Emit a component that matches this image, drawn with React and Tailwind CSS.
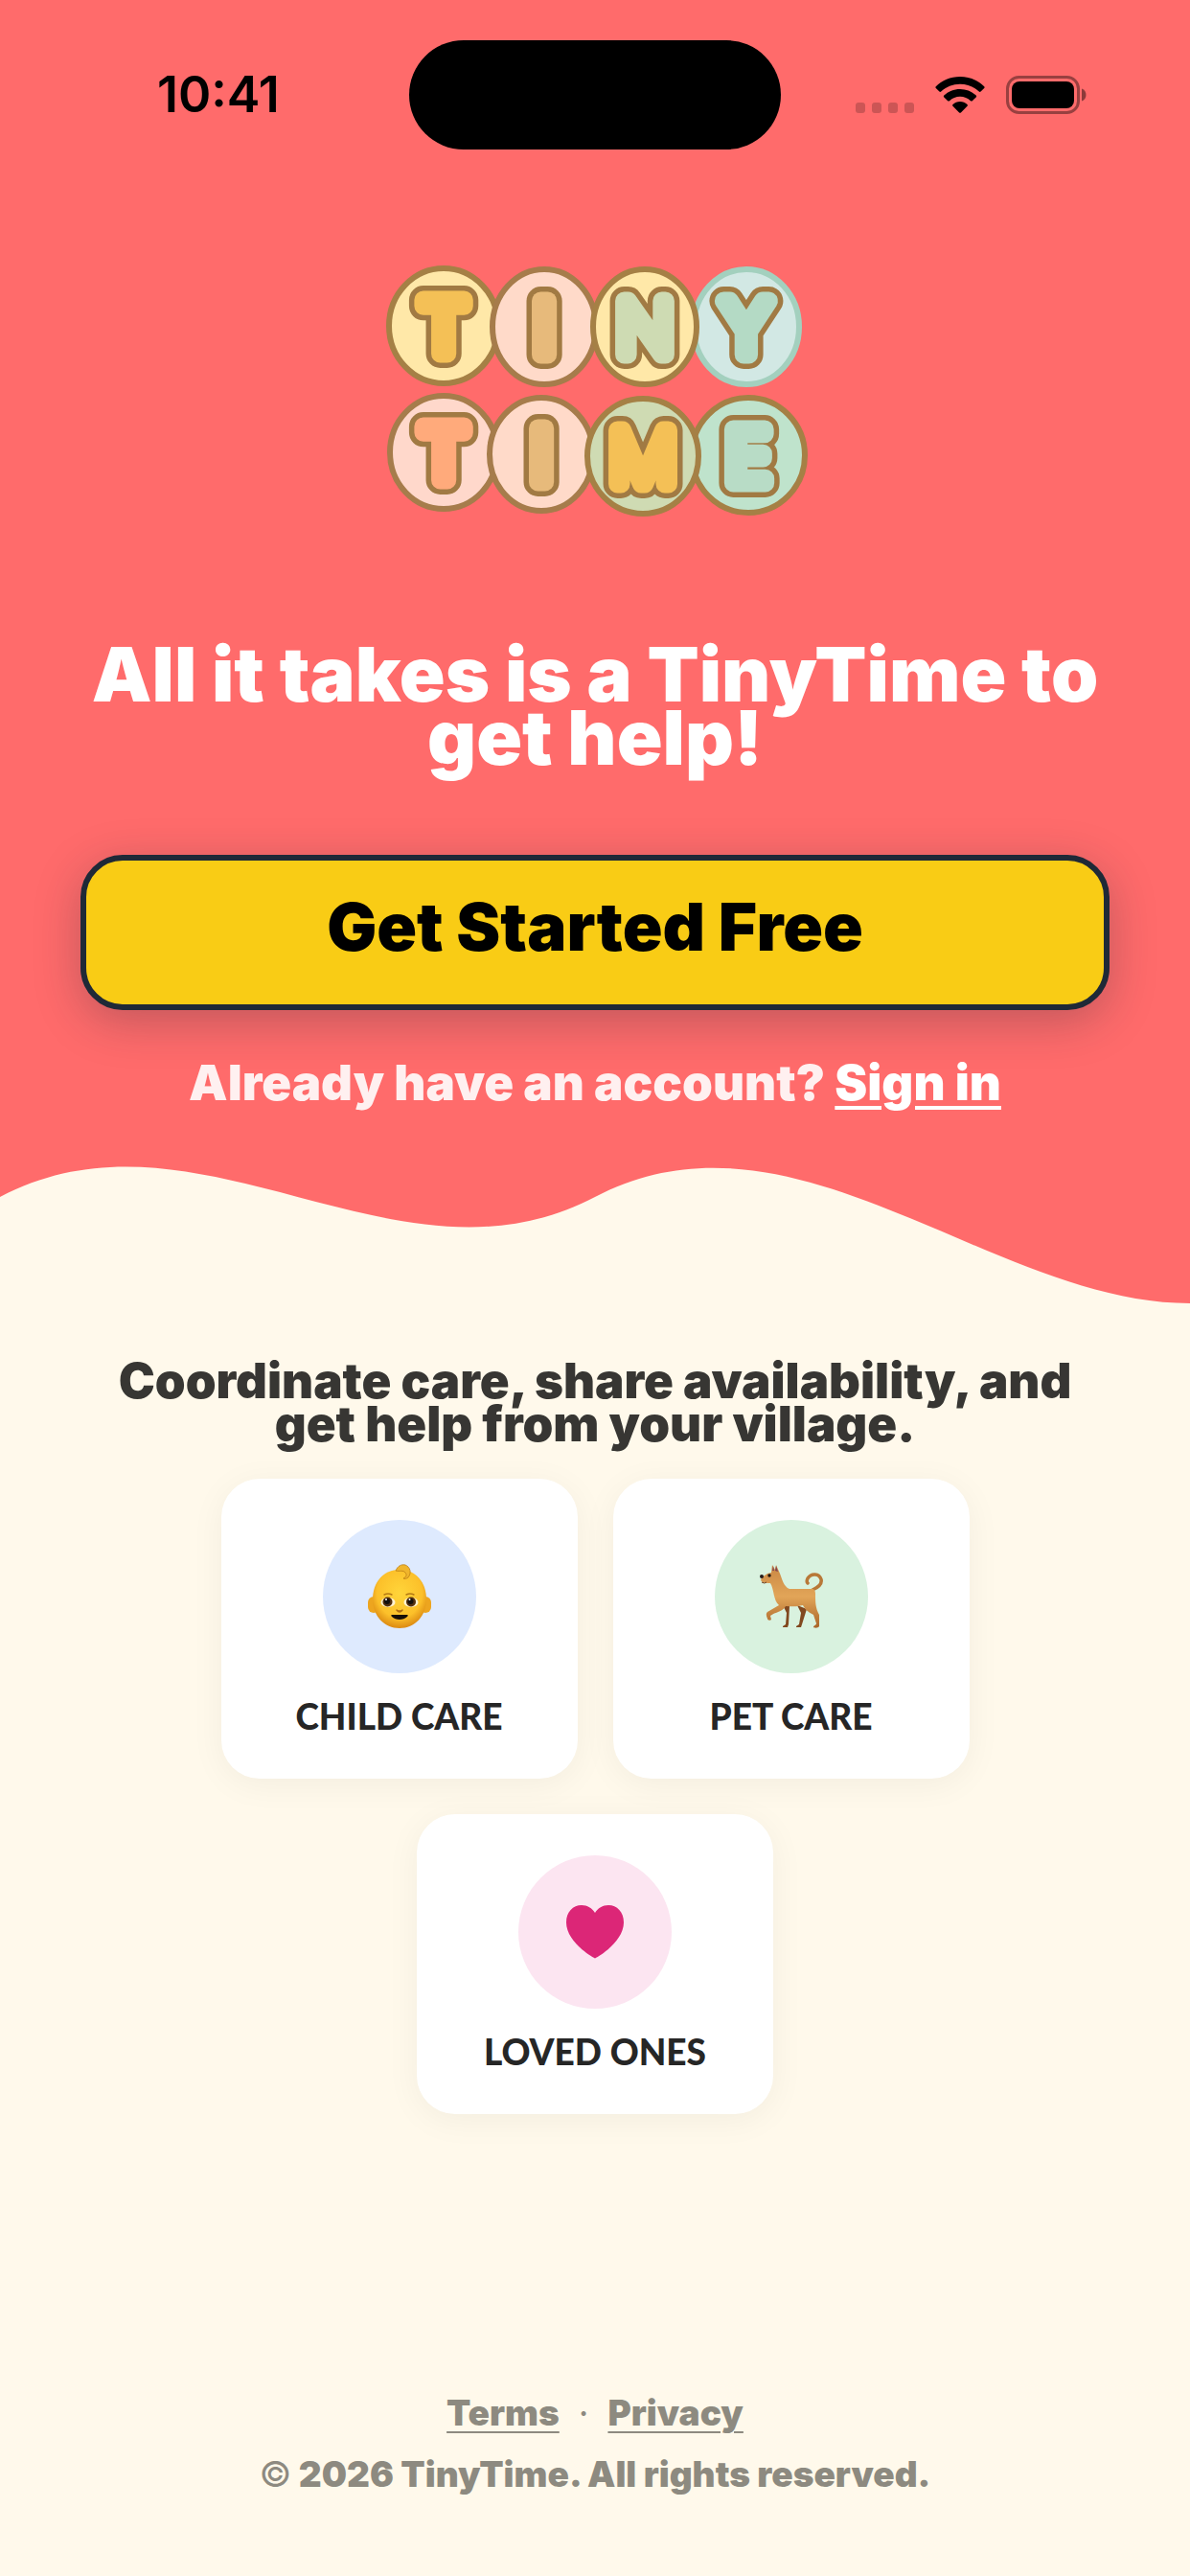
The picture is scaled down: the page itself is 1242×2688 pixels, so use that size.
const ROWS = [
  [
    { letter: "T", cx: 82, cy: 80, rx: 57, ry: 60, bg: "#ffe8a8", ring: "#a58045", fill: "#f4c056", weight: 400 },
    { letter: "Y", cx: 398, cy: 81, rx: 55, ry: 60, bg: "#d2e8e4", ring: "#a3d0be", fill: "#b4dac5", weight: 300 },
    { letter: "I", cx: 187, cy: 81, rx: 54, ry: 60, bg: "#ffdac9", ring: "#a67c4b", fill: "#e7ba7b", weight: 400 },
    { letter: "N", cx: 292, cy: 81, rx: 54, ry: 60, bg: "#ffe8a8", ring: "#a58045", fill: "#cedbb3", weight: 200 },
  ],
  [
    { letter: "T", cx: 82, cy: 212, rx: 56, ry: 59, bg: "#ffd8cb", ring: "#a67c4b", fill: "#ffaa7b", weight: 400 },
    { letter: "I", cx: 184, cy: 214, rx: 54, ry: 59, bg: "#ffdac9", ring: "#a67c4b", fill: "#e7ba7b", weight: 400 },
    { letter: "E", cx: 400, cy: 215, rx: 59, ry: 60, bg: "#bfe3cc", ring: "#a58045", fill: "#b8dcc6", weight: 300 },
    { letter: "M", cx: 290, cy: 216, rx: 58, ry: 60, bg: "#cfdbb3", ring: "#a58045", fill: "#f4c056", weight: 200 },
  ],
];

function Logo() {
  return (
    <svg viewBox="0 0 480 300" className="w-[480px] h-[300px]" role="img" aria-label="Tiny Time">
      {ROWS.flat().map((b) => (
        <g key={b.letter + b.cy}>
          <ellipse cx={b.cx} cy={b.cy} rx={b.rx} ry={b.ry} fill={b.bg} stroke={b.ring} strokeWidth="6" />
          <g
            fontFamily="Inter, sans-serif"
            fontSize="77"
            fontWeight={b.weight}
            textAnchor="middle"
            strokeLinejoin="round"
            strokeLinecap="round"
          >
            <text x={b.cx} y={b.cy + 29} fill="#a17a43" stroke="#a17a43" strokeWidth="30">{b.letter}</text>
            <text x={b.cx} y={b.cy + 29} fill={b.fill} stroke={b.fill} strokeWidth="19">{b.letter}</text>
          </g>
        </g>
      ))}
    </svg>
  );
}

function StatusBar() {
  return (
    <div className="flex justify-between items-center pt-[42px] pl-[164px] pr-[108px]">
      <span className="w-[263px] text-left font-semibold text-[52px] leading-[60px] text-black">10:41</span>
      <div className="w-[388px] h-[114px] rounded-full bg-black" />
      <div className="flex items-center justify-end w-[319px] gap-[22px]">
        <svg viewBox="0 0 61 40" className="w-[61px] h-10" fill="#000" fillOpacity="0.2">
          <rect x="0" y="28" width="10" height="11" rx="3" />
          <rect x="17" y="28" width="10" height="11" rx="3" />
          <rect x="34" y="28" width="10" height="11" rx="3" />
          <rect x="51" y="28" width="10" height="11" rx="3" />
        </svg>
        <svg viewBox="0 0 52 40" className="w-[52px] h-10">
          <path d="M26 1C16 1 7 5 .8 11.2c-.6.6-.6 1.2 0 1.8l3.6 3.6c.6.6 1.2.6 1.8 0C11.5 11.6 18.4 8.7 26 8.7s14.5 2.9 19.8 7.9c.6.6 1.2.6 1.8 0l3.6-3.6c.6-.6.6-1.2 0-1.8C45 5 36 1 26 1z" />
          <path d="M26 14c-6.5 0-12.4 2.5-16.7 6.6-.6.6-.6 1.2 0 1.8l3.9 3.8c.6.6 1.2.5 1.8 0 2.900-2.700 6.800-4.400 11-4.400s8.100 1.700 11 4.400c.6.5 1.200.6 1.800 0l3.900-3.800c.6-.6.6-1.200 0-1.800C38.400 16.500 32.500 14 26 14z" />
          <path d="M26 27c-2.9 0-5.5 1.1-7.5 2.9-.6.6-.6 1.2 0 1.8l6.600 6.700c.6.6 1.200.6 1.800 0l6.600-6.700c.6-.6.6-1.200 0-1.800C31.500 28.100 28.900 27 26 27z" />
        </svg>
        <svg viewBox="0 0 84 40" className="w-[84px] h-10">
          <rect x="1.5" y="1.5" width="74" height="37" rx="12" fill="none" stroke="#000" strokeOpacity="0.4" strokeWidth="3" />
          <rect x="6" y="6" width="65" height="28" rx="8" />
          <path d="M79 13.500c3 1.200 4.500 3.500 4.500 6.500s-1.500 5.300-4.500 6.500z" fillOpacity="0.45" />
        </svg>
      </div>
    </div>
  );
}

function BabyIcon() {
  return (
    <svg viewBox="0 0 66 68" className="w-[66px] h-[68px]">
      <defs>
        <radialGradient id="skin" cx="0.5" cy="0.4" r="0.6">
          <stop offset="0" stopColor="#ffd53a" />
          <stop offset="0.7" stopColor="#fcc02a" />
          <stop offset="1" stopColor="#dc8a12" />
        </radialGradient>
      </defs>
      <rect x="0" y="34" width="12" height="17" rx="6" fill="#eda51f" />
      <rect x="54" y="34" width="12" height="17" rx="6" fill="#eda51f" />
      <path d="M33 6C16 6 5 19 5 37c0 17 12 30 28 30s28-13 28-30C61 19 50 6 33 6z" fill="url(#skin)" />
      <path d="M29 7c2-5 6-7 10-6 5 2 7 8 3 13-1 1-4 2-5 1 3-1 4-4 2-6-2-3-6-1-10-2z" fill="#f0b52c" stroke="#bd7f15" strokeWidth="0.8" />
      <path d="M17 32q4-2 8 0M40 32q4-2 8 0" fill="none" stroke="#b57a14" strokeWidth="1.4" strokeLinecap="round" />
      <ellipse cx="21" cy="40" rx="7.5" ry="5" fill="#fff2cf" />
      <ellipse cx="45" cy="40" rx="7.5" ry="5" fill="#fff2cf" />
      <circle cx="20.5" cy="39.5" r="5" fill="#54300f" />
      <circle cx="45" cy="39.5" r="5" fill="#54300f" />
      <circle cx="20" cy="39" r="3" fill="#14100c" />
      <circle cx="44.5" cy="39" r="3" fill="#14100c" />
      <circle cx="19" cy="37" r="1" fill="#fff" />
      <circle cx="43.5" cy="37" r="1" fill="#fff" />
      <path d="M30 48q3 4 6 0" fill="#c88012" stroke="#ad6c12" strokeWidth="1.5" strokeLinecap="round" />
      <path d="M25 53h16c1 0 1 1 0 2-4 4-12 4-16 0-1-1-1-2 0-2z" fill="#180f08" />
    </svg>
  );
}

function DogIcon() {
  return (
    <svg viewBox="0 0 66 68" className="w-[66px] h-[68px]">
      <defs>
        <linearGradient id="coat" x1="0" y1="0" x2="0" y2="1">
          <stop offset="0" stopColor="#c98744" />
          <stop offset="0.5" stopColor="#e2a558" />
          <stop offset="1" stopColor="#a96529" />
        </linearGradient>
      </defs>
      <path d="M24 43l4 8-1 12-3 2v1h5l1-3 1-19zM39 43l4 8-2 12-3 2v1h5l1-3 5-16z" fill="#81481f" />
      <path d="M55 27c7-3 10-7 9-11-2-6-10-7-14-1-1 2-1 4 0 5" fill="none" stroke="#b87838" strokeWidth="3.5" strokeLinecap="round" />
      <path d="M12 9L13 1l3 5 1-5 4 9c2 5 4 14 10 16h23c3 0 4 2 4 5 0 8 0 15 4 22l0 12c-1 2-5 2-6 1 0-2 3-2 3-4l-3-9c-6-3-9-6-11-10-7 2-12 1-18 1-3 6-11 6-16 10l1 4c-1 1-4 1-4-1-1-3-2-5 0-7l12-7c-6-5-5-17-9-23-4 0-8 0-10-3l1-3 6-4z" fill="url(#coat)" />
      <path d="M13 7l1-5 1 5zM16 7l1-5 2 6z" fill="#814452" />
      <circle cx="10" cy="12" r="1.7" fill="#201710" />
      <circle cx="2" cy="13" r="2" fill="#251b19" />
      <path d="M2 19q3 2 5 0" stroke="#6b3b1b" fill="none" />
    </svg>
  );
}

function HeartIcon() {
  return (
    <svg viewBox="0 0 60 56" className="w-[60px] h-14">
      <path d="M30 55.5C24 52.5 0 37 0 18 0 7 7 0 16 0c6 0 11 3 14 8 3-5 8-8 14-8 9 0 16 7 16 18 0 19-24 34.5-30 37.5z" fill="#dc2677" />
    </svg>
  );
}

const CARDS = [
  { label: "CHILD CARE", Icon: BabyIcon, circle: "bg-[#deeafe]" },
  { label: "PET CARE", Icon: DogIcon, circle: "bg-[#d9f2df]" },
  { label: "LOVED ONES", Icon: HeartIcon, circle: "bg-[#fce5f1]" },
];

function Card({ label, Icon, circle }) {
  return (
    <div className="flex flex-col items-center w-[372px] h-[313px] pt-[43px] bg-white rounded-[40px] shadow-[0_6px_36px_rgba(0,0,0,0.05)]">
      <div className={`flex items-center justify-center size-40 rounded-full ${circle}`}>
        <Icon />
      </div>
      <p className="mt-[22px] font-['Lato',sans-serif] text-[37px] leading-[46px] text-[#262626]">{label}</p>
    </div>
  );
}

export default function App() {
  return (
    <div className="flex flex-col min-h-screen bg-[#fff9eb] font-['Inter',sans-serif] font-black text-center">
      <header className="bg-[#ff6b6b]">
        <StatusBar />
        <div className="flex flex-col items-center px-[84px] pt-[104px]">
          <Logo />
          <h1 className="mt-[110px] text-[79px] leading-[66px] text-white">
            All it takes is a TinyTime to get help!
          </h1>
          <button className="w-full h-[162px] mt-[90px] pb-3 rounded-[44px] border-6 border-[#1f2937] bg-[#f9cc15] text-[69px] leading-[72px] text-black shadow-[0_12px_48px_rgba(31,41,55,0.28)]">
            Get Started Free
          </button>
          <p className="mt-[52px] text-[51px] leading-[48px] text-white/90">
            Already have an account?{" "}
            <a href="#signin" className="text-white underline decoration-4 underline-offset-6">Sign in</a>
          </p>
        </div>
        <svg viewBox="0 0 1242 160" preserveAspectRatio="none" className="block w-full h-[160px] mt-[46px]">
          <path d="M0 49C207-60 414 158 621 49S1035 160 1242 160V161H0z" fill="#fff9eb" />
        </svg>
      </header>

      <main className="flex flex-col items-center px-[84px] pt-[58px]">
        <p className="text-[51px] leading-[45px] text-[#373633]">
          Coordinate care, share availability, and get help from your village.
        </p>
        <div className="flex flex-wrap justify-center gap-[37px] mt-[35px] max-w-[900px]">
          {CARDS.map((c) => (
            <Card key={c.label} {...c} />
          ))}
        </div>
      </main>

      <footer className="mt-auto pb-[82px] text-[37px] leading-[48px] text-[#8d8a80]">
        <div className="flex justify-center gap-5">
          <a href="#terms" className="underline decoration-2 underline-offset-6">Terms</a>
          <span className="font-normal">·</span>
          <a href="#privacy" className="underline decoration-2 underline-offset-6">Privacy</a>
        </div>
        <p className="mt-4">
          <span className="font-normal">©</span> 2026 TinyTime. All rights reserved.
        </p>
      </footer>
    </div>
  );
}
